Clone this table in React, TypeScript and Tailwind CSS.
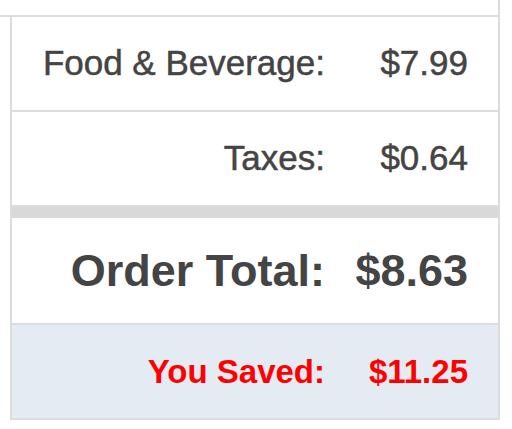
import React from 'react';

const rows = [
  { label: 'Food & Beverage:', value: '$7.99' },
  { label: 'Taxes:', value: '$0.64' },
];

const App = () => {
  return (
    <div className="w-[512px] h-[429px] bg-white overflow-hidden" style={{ fontFamily: '"Liberation Sans", Arial, sans-serif' }}>
      {/* bottom of the previous block */}
      <div className="w-[500px] h-[17px] border-r-2 border-b-2 border-[#dcdcdc]" />

      <div className="ml-[10px] w-[490px] border-x-2 border-b-2 border-[#dcdcdc] text-[#444444]">
        {rows.map((r, i) => (
          <div key={i} className="flex items-center h-[95px] border-b-2 border-[#dcdcdc] text-[35px] pr-[30px] [-webkit-text-stroke:0.5px_#444444]">
            <div className="flex-1 text-right">{r.label}</div>
            <div className="w-[143px] text-right">{r.value}</div>
          </div>
        ))}
        <div className="h-[11px] bg-[#d9d9d9]" />
        <div className="flex items-center h-[107px] border-b-2 border-[#dcdcdc] text-[45px] font-bold pr-[30px]">
          <div className="flex-1 text-right">Order Total:</div>
          <div className="w-[143px] text-right">$8.63</div>
        </div>
        <div className="flex items-center h-[93px] bg-[#e4ebf2] text-[33px] font-bold text-[#ff0000] pr-[30px]">
          <div className="flex-1 text-right">You Saved:</div>
          <div className="w-[143px] text-right">$11.25</div>
        </div>
      </div>
    </div>
  );
};

export default App;
